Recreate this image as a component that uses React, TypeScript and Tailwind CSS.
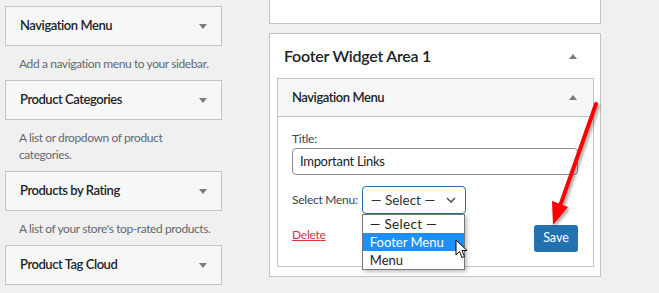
import React from 'react';

const DownTri = () => (
    <svg width="8" height="5" viewBox="0 0 8 5" className="shrink-0"><path d="M0 0h8L4 5z" fill="#787c82" /></svg>
);

const UpTri = () => (
    <svg width="8" height="5" viewBox="0 0 8 5" className="shrink-0"><path d="M0 5h8L4 0z" fill="#787c82" /></svg>
);

const available = [
    { title: 'Navigation Menu', desc: ['Add a navigation menu to your sidebar.'] },
    { title: 'Product Categories', desc: ['A list or dropdown of product', 'categories.'] },
    { title: 'Products by Rating', desc: ["A list of your store's top-rated products."] },
    { title: 'Product Tag Cloud', desc: [] as string[] },
];

const App: React.FC = () => {
    return (
        <div className="relative w-[659px] h-[293px] overflow-hidden bg-[#f0f0f1] flex font-['Lato',sans-serif] text-[#1d2327]">
            {/* available widgets */}
            <div className="w-[217px] ml-[5px] pt-[6px] flex flex-col">
                {available.map((w) => (
                    <div key={w.title}>
                        <div className="h-[40px] border border-[#c3c4c7] bg-[#f6f7f7] flex items-center justify-between px-[14px]">
                            <span className="text-[13px] font-semibold tracking-[-0.45px]">{w.title}</span>
                            <DownTri />
                        </div>
                        {w.desc.length > 0 && (
                            <div className="px-[14px] pt-[9px] pb-[8px] text-[12px] leading-[17px] tracking-[-0.4px] text-[#646970] whitespace-nowrap">
                                {w.desc.map((d) => <div key={d}>{d}</div>)}
                            </div>
                        )}
                    </div>
                ))}
            </div>

            {/* sidebar areas */}
            <div className="w-[332px] ml-[47px] flex flex-col">
                <div className="h-[24px] bg-white border-x border-b border-[#c3c4c7]"></div>
                <div className="mt-[9px] bg-white border border-[#c3c4c7] pb-[9px]">
                    <div className="h-[44px] flex items-center justify-between pl-[14px] pr-[23px]">
                        <h2 className="text-[16px] font-semibold tracking-[-0.25px]">Footer Widget Area 1</h2>
                        <UpTri />
                    </div>
                    <div className="ml-[7px] w-[317px] border border-[#c3c4c7]">
                        <div className="h-[38px] bg-[#f6f7f7] border-b border-[#c3c4c7] flex items-center justify-between pl-[14px] pr-[16px]">
                            <span className="text-[13px] font-semibold tracking-[-0.45px]">Navigation Menu</span>
                            <UpTri />
                        </div>
                        <div className="pl-[14px] pr-[15px] pt-[13px] pb-[14px] text-[12px] tracking-[-0.25px]">
                            <div className="leading-[18px] text-[#3c434a]">Title:</div>
                            <div className="h-[27px] border border-[#8c8f94] rounded-[4px] flex items-center px-[7px] text-[13px] tracking-[-0.3px]">Important Links</div>
                            <div className="mt-[11px] flex items-center gap-[4px]">
                                <span className="text-[#3c434a]">Select Menu:</span>
                                <div className="relative">
                                    <div className="w-[104px] h-[28px] border border-[#2271b1] rounded-[4px] flex items-center justify-between pl-[8px] pr-[9px] text-[13.5px] tracking-normal text-[#2c3338]">
                                        <span>— Select —</span>
                                        <svg width="10" height="7" viewBox="0 0 10 7"><path d="M1 1l4 4 4-4" stroke="#50575e" strokeWidth="1.6" fill="none" /></svg>
                                    </div>
                                    <div className="absolute left-0 top-full w-[103px] bg-white border border-[#767676] shadow-[2px_2px_4px_rgba(0,0,0,0.25)] text-[13px] tracking-normal text-[#1d2327] z-10">
                                        <div className="h-[18px] leading-[18px] pl-[7px] text-[13.5px] tracking-[0.3px]">— Select —</div>
                                        <div className="h-[18px] leading-[18px] pl-[7px] bg-[#1e8fff] text-white">Footer Menu</div>
                                        <div className="h-[18px] leading-[18px] pl-[7px]">Menu</div>
                                        <svg className="absolute left-[92px] top-[24px]" width="13" height="20" viewBox="0 0 13 20">
                                            <path d="M1 1v15l3.5-3.5 2.5 6 2.5-1-2.5-6h5z" fill="#fff" stroke="#000" strokeWidth="1" strokeLinejoin="round" />
                                        </svg>
                                    </div>
                                </div>
                            </div>
                            <div className="mt-[11px] flex items-start justify-between">
                                <a className="text-[#d63638] underline leading-[17px] mt-[1px]">Delete</a>
                                <button className="w-[44px] h-[27px] rounded-[3px] bg-[#2271b1] text-white text-[12.5px] tracking-normal">Save</button>
                            </div>
                        </div>
                    </div>
                </div>
            </div>

            {/* annotation arrow */}
            <svg className="absolute inset-0 pointer-events-none" width="659" height="293" viewBox="0 0 659 293">
                <defs>
                    <filter id="sh" x="-50%" y="-50%" width="200%" height="200%">
                        <feDropShadow dx="2" dy="2" stdDeviation="1.5" floodColor="#000" floodOpacity="0.35" />
                    </filter>
                </defs>
                <g filter="url(#sh)">
                    <line x1="596" y1="104" x2="559" y2="209" stroke="#ff0000" strokeWidth="4" strokeLinecap="round" />
                    <path d="M553 225 L552 201 L568 207 Z" fill="#ff0000" />
                </g>
            </svg>
        </div>
    );
};

export default App;
